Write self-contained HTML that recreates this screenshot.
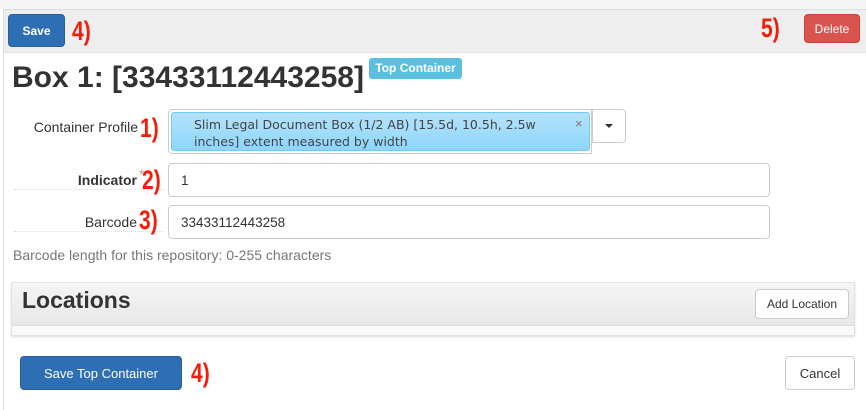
<!DOCTYPE html>
<html><head><style>
body{margin:0;width:866px;height:400px;background:#fff;font-family:"Liberation Sans",sans-serif;position:relative;overflow:hidden;color:#333}
.a{position:absolute}
.red{color:#f21d0a;font-weight:bold;font-size:27px;transform:scaleX(0.78);transform-origin:left top;line-height:27px}
.btn{position:absolute;border-radius:4px;font-size:12px;display:flex;align-items:center;justify-content:center;box-sizing:border-box}
.inp{position:absolute;border:1px solid #ccc;border-radius:4px;box-sizing:border-box;font-size:13.5px;padding-left:12px;display:flex;align-items:center;background:#fff}
.lbl{position:absolute;font-size:14px;text-align:right}
</style></head><body>
<div class="a" style="left:0;top:0;width:866px;height:9px;background:#f5f5f5"></div>
<div class="a" style="left:3px;top:9px;width:863px;height:400px;border-left:1px solid #ddd;border-top:1px solid #ddd;background:#fff"></div>
<div class="a" style="left:4px;top:10px;width:862px;height:42px;background:#eee;border-bottom:1px solid #e2e2e2"></div>
<div class="btn" style="left:8px;top:14px;width:57px;height:33px;background:#2e6fb4;color:#fff;font-weight:bold;border:1px solid #285e99">Save</div>
<div class="a red" style="left:72px;top:18px">4)</div>
<div class="a red" style="left:761px;top:15px">5)</div>
<div class="btn" style="left:804px;top:14px;width:56px;height:29px;background:#d9534f;color:#fff;border:1px solid #c9403c">Delete</div>
<div class="a" style="left:12px;top:61px;font-size:30px;font-weight:bold;color:#333">Box 1: [33433112443258]</div>
<div class="a" style="left:369px;top:58px;width:93px;height:21px;background:#5bc0de;border-radius:3px;color:#fff;font-size:12px;font-weight:bold;text-align:center;line-height:21px">Top Container</div>
<div class="lbl" style="left:20px;top:119px;width:118px">Container Profile</div>
<div class="a red" style="left:140px;top:115px">1)</div>
<div class="a" style="left:168px;top:109px;width:424px;height:45px;border:1px solid #ccc;border-radius:4px 0 0 4px;box-sizing:border-box"></div>
<div class="a" style="left:171px;top:112px;width:419px;height:39px;background:linear-gradient(#b4e3fb,#8fd6fb);border:1px solid #6ccaf7;border-radius:3px;box-sizing:border-box;font-family:'DejaVu Sans',sans-serif;font-size:12.5px;color:#444;padding:3px 20px 0 22px;line-height:17px">Slim Legal Document Box (1/2 AB) [15.5d, 10.5h, 2.5w inches] extent measured by width</div>
<div class="a" style="left:575px;top:116px;color:#777;font-size:13px">×</div>
<div class="a" style="left:592px;top:109px;width:34px;height:34px;border:1px solid #ccc;border-radius:0 4px 4px 0;box-sizing:border-box;display:flex;align-items:center;justify-content:center"><div style="border-left:4px solid transparent;border-right:4px solid transparent;border-top:4px solid #333"></div></div>
<div class="a" style="left:14px;top:189px;width:150px;border-top:1px dotted #ddd"></div>
<div class="lbl" style="left:20px;top:172px;width:117px;font-weight:bold">Indicator</div>
<div class="a" style="left:139px;top:166px;color:#aaa;font-size:14px">*</div>
<div class="a red" style="left:142px;top:167px">2)</div>
<div class="inp" style="left:168px;top:163px;width:602px;height:34px">1</div>
<div class="a" style="left:14px;top:231px;width:150px;border-top:1px dotted #ddd"></div>
<div class="lbl" style="left:20px;top:214px;width:117px">Barcode</div>
<div class="a red" style="left:139px;top:207px">3)</div>
<div class="inp" style="left:168px;top:205px;width:602px;height:34px">33433112443258</div>
<div class="a" style="left:13px;top:247px;font-size:14px;color:#777">Barcode length for this repository: 0-255 characters</div>
<div class="a" style="left:11px;top:282px;width:844px;height:54px;border:1px solid #e3e3e3;box-sizing:border-box;background:#f9f9f9;box-shadow:0 1px 2px rgba(0,0,0,.15)"></div>
<div class="a" style="left:12px;top:283px;width:842px;height:42px;background:linear-gradient(#f5f5f5,#e8e8e8);border-bottom:1px solid #ddd"></div>
<div class="a" style="left:22px;top:287px;font-size:23px;font-weight:bold;color:#333">Locations</div>
<div class="btn" style="left:755px;top:289px;width:94px;height:30px;background:#fff;border:1px solid #ccc;color:#333">Add Location</div>
<div class="btn" style="left:20px;top:356px;width:162px;height:34px;background:#2e6fb4;color:#fff;font-size:13px;border:1px solid #285e99">Save Top Container</div>
<div class="a red" style="left:191px;top:360px">4)</div>
<div class="btn" style="left:785px;top:356px;width:70px;height:34px;background:#fff;border:1px solid #ccc;color:#333;font-size:13px">Cancel</div>
</body></html>
